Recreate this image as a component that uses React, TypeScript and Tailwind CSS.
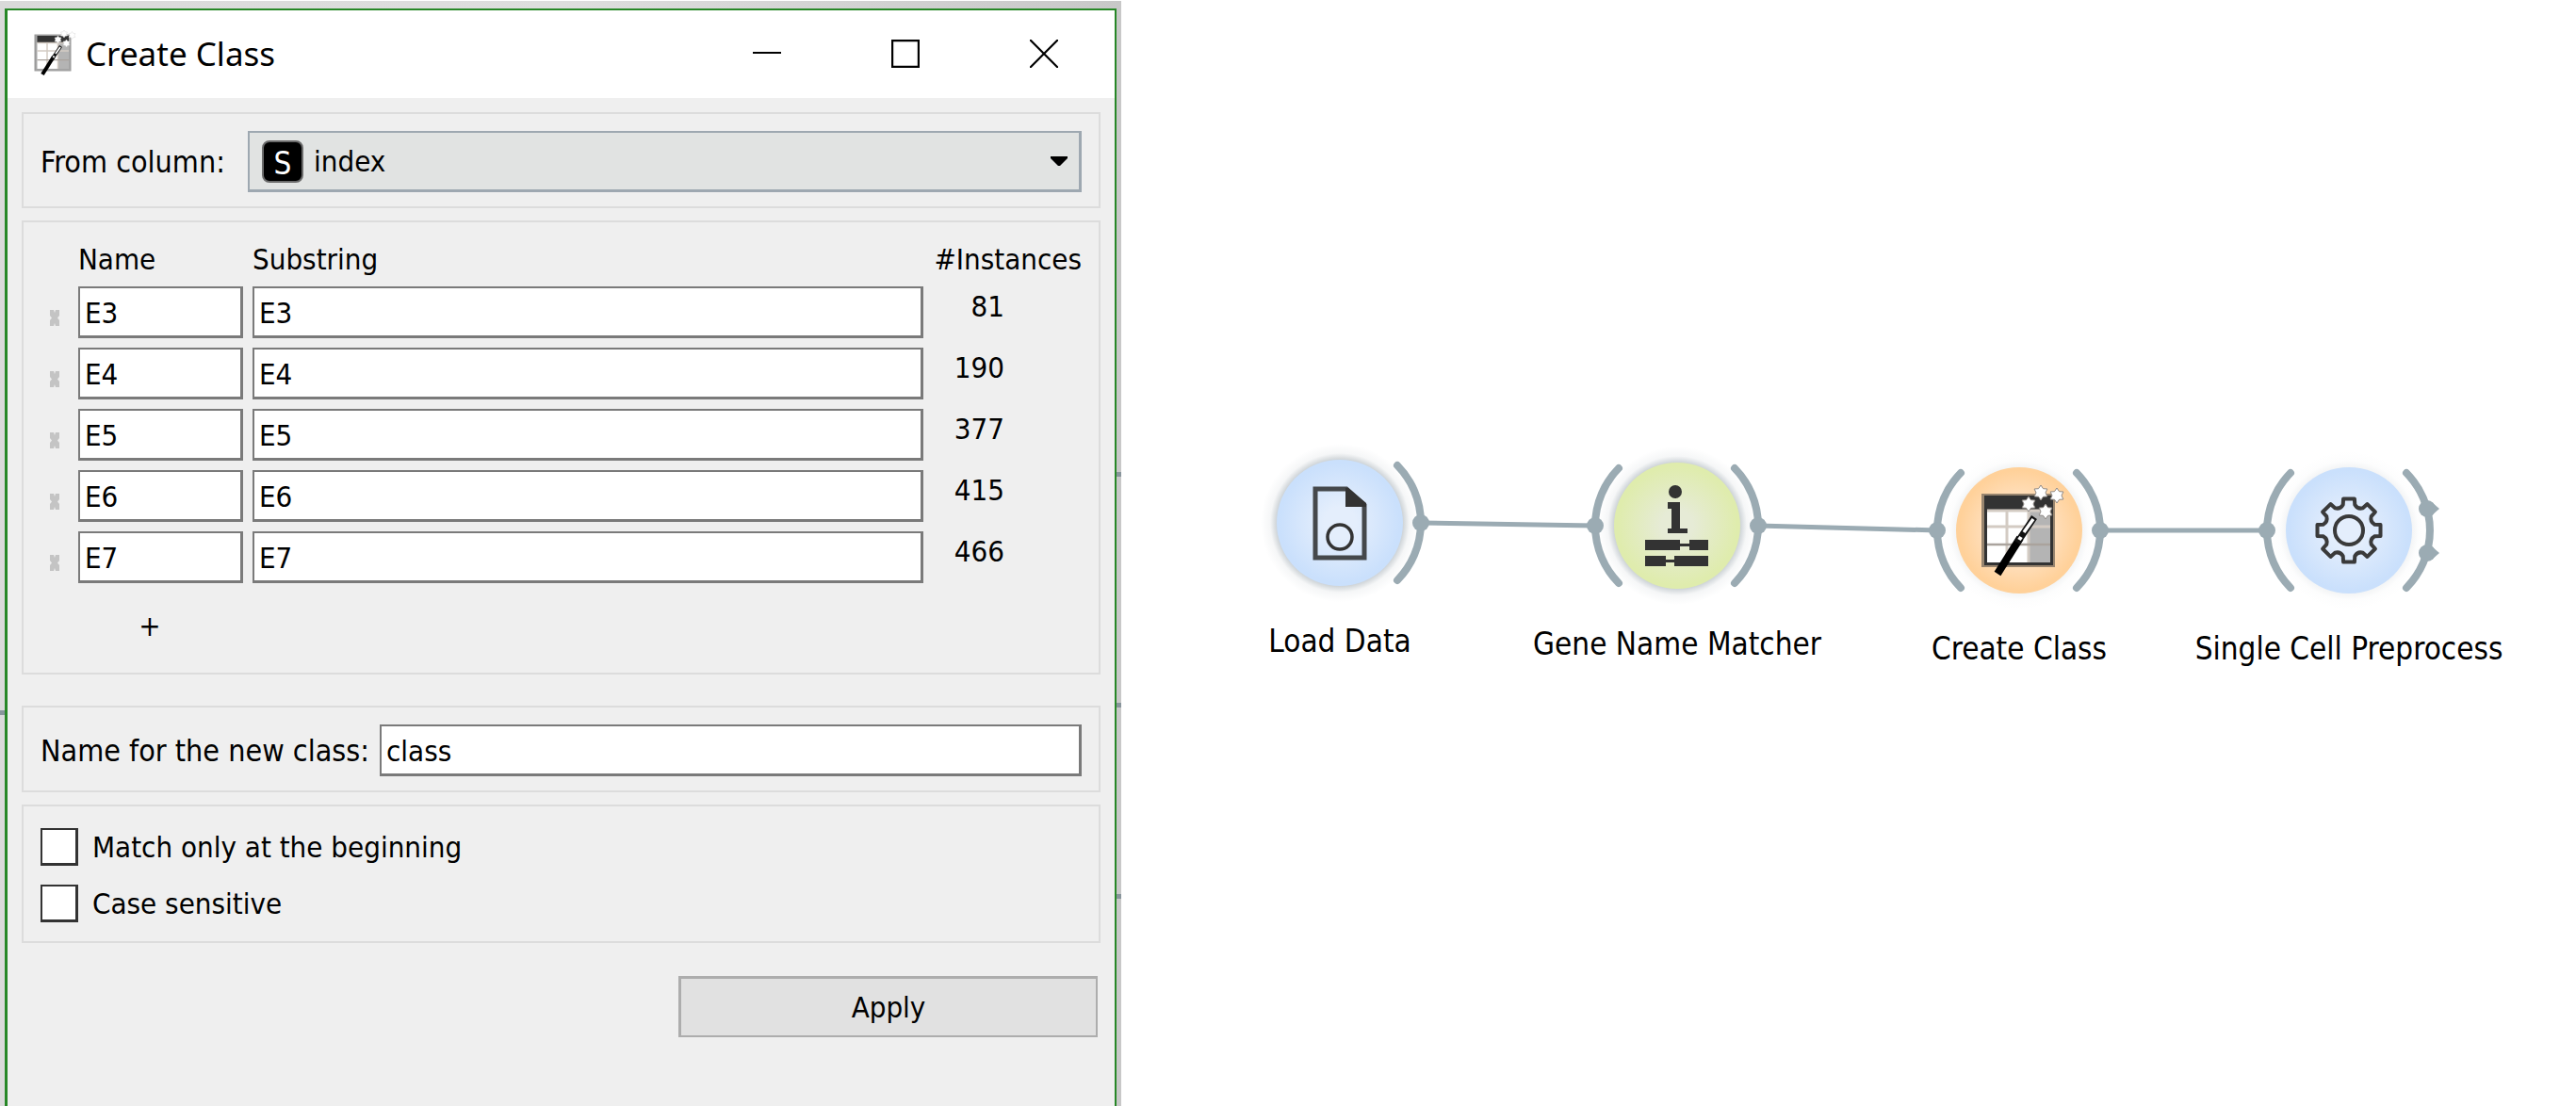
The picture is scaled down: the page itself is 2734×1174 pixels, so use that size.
import React from "react";

const rules = [
  { name: "E3", count: 81 },
  { name: "E4", count: 190 },
  { name: "E5", count: 377 },
  { name: "E6", count: 415 },
  { name: "E7", count: 466 },
];

/* Table with a magic wand; drawn around the origin, about 80 units wide. */
const stars = [
  [10, -28],
  [23, -40],
  [40, -37],
  [28, -20],
];

function starPoints(cx: number, cy: number) {
  const pts: string[] = [];
  for (let i = 0; i < 12; i++) {
    const r = i % 2 ? 5 : 8;
    const a = (i * Math.PI) / 6 - Math.PI / 2;
    pts.push(`${(cx + r * Math.cos(a)).toFixed(1)},${(cy + r * Math.sin(a)).toFixed(1)}`);
  }
  return pts.join(" ");
}

function WandTable({ frame, edge, starEdge }: { frame: string; edge: string; starEdge: string }) {
  return (
    <g>
      <rect x="-40" y="-39" width="78" height="78" fill={edge} />
      <rect x="-37" y="-37" width="73" height="74" fill={frame} />
      <rect x="-34" y="-36" width="67" height="15" fill="#333" />
      <rect x="-34" y="-22" width="67" height="56" fill="#fff" />
      <rect x="11" y="-22" width="22" height="56" fill="#b4b4b4" />
      <path d="M-34 -21H33M-13 -22V34M-34 -4H33" stroke="#d3cbc3" strokeWidth="3" />
      <path d="M10 -22V34" stroke="#d3cbc3" strokeWidth="3" />
      <path d="M-34 15H33" stroke="#aaa39d" strokeWidth="2.5" />
      <path d="M-23 46L1 8" stroke="#000" strokeWidth="8" />
      <path d="M-2 13L16 -14" stroke="#111" strokeWidth="7" />
      <path d="M5 2L15 -12" stroke="#fff" strokeWidth="3.5" />
      <path d="M0 10L2 7" stroke="#fff" strokeWidth="4" />
      {stars.map(([x, y]) => (
        <polygon key={x} points={starPoints(x, y)} fill="#fff" stroke={starEdge} strokeWidth="1" />
      ))}
    </g>
  );
}

function DocumentIcon() {
  return (
    <g>
      <path d="M-26 -36H7L26 -19V37H-26Z" fill="none" stroke="#45484b" strokeWidth="5" />
      <path d="M6 -37H9L28 -21V-17H6Z" fill="#333" />
      <circle cx="0" cy="15" r="13" fill="none" stroke="#333" strokeWidth="3.5" />
    </g>
  );
}

function GeneInfoIcon() {
  return (
    <g fill="#333">
      <circle cx="-2" cy="-36" r="7" />
      <rect x="-10" y="-25" width="13" height="7" />
      <rect x="-6" y="-25" width="9" height="30" />
      <rect x="-10" y="3" width="21" height="5" />
      <rect x="-34" y="15" width="37" height="11" />
      <rect x="13" y="15" width="20" height="11" />
      <rect x="0" y="19" width="16" height="3" />
      <rect x="-34" y="32" width="22" height="11" />
      <rect x="-3" y="32" width="36" height="11" />
      <rect x="-14" y="36" width="14" height="3" />
    </g>
  );
}

function gearPath() {
  const p = (r: number, deg: number) => {
    const a = ((deg - 90) * Math.PI) / 180;
    return `${(r * Math.cos(a)).toFixed(1)} ${(r * Math.sin(a)).toFixed(1)}`;
  };
  let d = "";
  for (let i = 0; i < 8; i++) {
    const c = i * 45;
    d += `${i ? "L" : "M"}${p(28, c - 13)}L${p(34, c - 10)}L${p(34, c + 10)}L${p(28, c + 13)}Q${p(24, c + 22.5)} ${p(28, c + 32)}`;
  }
  return d + "Z";
}

function GearIcon() {
  return (
    <g fill="none" stroke="#3a3a3a" strokeWidth="4">
      <path d={gearPath()} strokeLinejoin="round" />
      <circle cx="0" cy="0" r="15" />
    </g>
  );
}

type Node = {
  id: string;
  label: string;
  x: number;
  y: number;
  inner: string;
  outer: string;
  glow: number;
  input: boolean;
  outputs: number[];
  icon: React.ReactNode;
};

const nodes: Node[] = [
  { id: "load", label: "Load Data", x: 232, y: 555, inner: "#e4eefc", outer: "#cae0fc", glow: 0.5, input: false, outputs: [0], icon: <DocumentIcon /> },
  { id: "gene", label: "Gene Name Matcher", x: 590, y: 558, inner: "#e6ebd6", outer: "#dfecad", glow: 0.5, input: true, outputs: [0], icon: <GeneInfoIcon /> },
  { id: "class", label: "Create Class", x: 953, y: 563, inner: "#ffe8d2", outer: "#ffd19a", glow: 0.12, input: true, outputs: [0], icon: <WandTable frame="#333" edge="#98856f" starEdge="#8f8a86" /> },
  { id: "prep", label: "Single Cell Preprocess", x: 1303, y: 563, inner: "#e4eefc", outer: "#cae0fc", glow: 0.12, input: true, outputs: [-23, 24], icon: <GearIcon /> },
];

function WorkflowNode({ node }: { node: Node }) {
  return (
    <div className="absolute flex w-0 flex-col items-center" style={{ left: node.x, top: node.y - 100 }}>
      <svg width="200" height="200" viewBox="-100 -100 200 200" className="shrink-0" aria-hidden="true">
        <defs>
          <radialGradient id={`${node.id}-fill`}>
            <stop offset="0.25" stopColor={node.inner} />
            <stop offset="0.95" stopColor={node.outer} />
          </radialGradient>
          <radialGradient id={`${node.id}-glow`}>
            <stop offset="0.78" stopColor="#8d9aa3" stopOpacity={node.glow} />
            <stop offset="0.88" stopColor="#8d9aa3" stopOpacity={node.glow / 6} />
            <stop offset="1" stopColor="#8d9aa3" stopOpacity="0" />
          </radialGradient>
        </defs>
        <circle r="84" fill={`url(#${node.id}-glow)`} />
        <circle r="67" fill={`url(#${node.id}-fill)`} />
        <g fill="none" stroke="#9babb3" strokeWidth="8" strokeLinecap="round">
          {node.input && <path d="M-62 -61A87 87 0 0 0 -62 61" />}
          <path d="M61 -61A87 87 0 0 1 61 61" />
        </g>
        {node.input && <circle cx="-87" cy="0" r="9" fill="#9babb3" />}
        {node.outputs.map((y) => (
          <g key={y} fill="#9babb3">
            <circle cx={y ? 83 : 86} cy={y} r="9" />
            {y !== 0 && <path d={`M88 ${y - 7}L96 ${y}L88 ${y + 7}Z`} />}
          </g>
        ))}
        {node.icon}
      </svg>
      <span className="mt-1.5 whitespace-nowrap text-[33px] leading-10">{node.label}</span>
    </div>
  );
}

function Panel({ className, children }: { className: string; children: React.ReactNode }) {
  return <section className={`border-2 border-[#dcdcdc] ${className}`}>{children}</section>;
}

const field = "block h-[55px] border-2 border-r-3 border-b-3 border-[#7a7a7a] bg-white pt-0.5 pl-[5px] outline-none";
const tick = "size-10 shrink-0 appearance-none border-2 border-r-3 border-b-3 border-[#333] bg-white checked:bg-[#333]";

function Dialog() {
  return (
    <div className="relative mt-px flex flex-col bg-linear-to-r from-[#dadada] via-[#dedede] to-[#c8c8c8] px-[5px] pt-2">
      <span className="absolute left-0 top-[753px] h-[5px] w-[5px] bg-[#88959b]" />
      <span className="absolute right-0 top-[500px] h-[5px] w-[5px] bg-[#88959b]" />
      <span className="absolute right-0 top-[745px] h-[5px] w-[5px] bg-[#88959b]" />
      <span className="absolute right-0 top-[948px] h-[5px] w-[5px] bg-[#88959b]" />
      <div className="flex flex-1 flex-col border-2 border-b-0 border-l-3 border-[#278727] bg-[#efefef]">
        <header className="flex h-[93px] items-center bg-white pl-[27px] pr-[60px]">
          <svg width="48" height="52" viewBox="-43 -48 96 104" aria-hidden="true">
            <WandTable frame="#a6a6a6" edge="#9a9a9a" starEdge="#d8d8d8" />
          </svg>
          <h1 className="-mt-0.5 ml-2 flex-1 font-['Noto_Sans'] text-[35px] leading-10">Create Class</h1>
          <div className="flex gap-[117px] pb-0.5">
            <button aria-label="Minimize" className="block">
              <svg width="30" height="30" viewBox="0 0 30 30"><path d="M0 14H30" stroke="#000" strokeWidth="2" /></svg>
            </button>
            <button aria-label="Maximize" className="block">
              <svg width="30" height="30" viewBox="0 0 30 30"><path d="M1 1H29V29H1Z" fill="none" stroke="#000" strokeWidth="2.4" /></svg>
            </button>
            <button aria-label="Close" className="block">
              <svg width="30" height="30" viewBox="0 0 30 30"><path d="M0 0L30 30M30 0L0 30" stroke="#000" strokeWidth="2.2" /></svg>
            </button>
          </div>
        </header>

        <main className="flex flex-1 flex-col p-[15px] text-[31px] leading-9">
          <Panel className="flex items-center px-[18px] pt-[18px] pb-[15px]">
            <label htmlFor="column" className="w-[220px] text-[32px]">From column:</label>
            <div className="relative flex-1">
              <select id="column" className="block h-[65px] w-full appearance-none border-2 border-r-3 border-b-3 border-[#9ea8b1] bg-[#e1e3e2] pl-[68px] outline-none">
                <option>index</option>
              </select>
              <span className="pointer-events-none absolute left-[15px] top-2.5 flex h-[45px] w-11 items-center justify-center rounded-[8px] border-2 border-[#6b6b6b] bg-black pt-1 text-[33px] text-white">S</span>
              <svg className="pointer-events-none absolute right-[15px] top-[27px]" width="18" height="10" viewBox="0 0 18 10" aria-hidden="true">
                <path d="M0 0H18V2L10 10H8L0 2Z" />
              </svg>
            </div>
          </Panel>

          <Panel className="mt-[13px] pr-[18px] pb-[30px]">
            <table className="w-full table-fixed border-collapse">
              <colgroup>
                <col className="w-[58px]" />
                <col className="w-[185px]" />
                <col />
                <col className="w-[168px]" />
              </colgroup>
              <thead>
                <tr className="h-[68px] text-left align-bottom">
                  <td />
                  <th className="p-0 pb-[11px] font-normal">Name</th>
                  <th className="p-0 pb-[11px] font-normal">Substring</th>
                  <th className="p-0 pb-[11px] text-right font-normal">#Instances</th>
                </tr>
              </thead>
              <tbody>
                {rules.map((r) => (
                  <tr key={r.name} className="h-[65px] align-top">
                    <td className="p-0 pt-[25px] pl-[27px]">
                      <button aria-label={`Remove ${r.name}`} className="block">
                        <svg width="12" height="17" viewBox="0 0 12 17"><path d="M1 0H5L6 3L7 0H11V6L9 8.5L11 11V17H7L6 14L5 17H1V11L3 8.5L1 6Z" fill="#c4c4c4" /></svg>
                      </button>
                    </td>
                    <td className="p-0 pr-2.5"><input aria-label="Name" defaultValue={r.name} className={`${field} w-full`} /></td>
                    <td className="p-0"><input aria-label="Substring" defaultValue={r.name} className={`${field} w-full`} /></td>
                    <td className="p-0 pr-[82px] text-right leading-[42px]">{r.count}</td>
                  </tr>
                ))}
              </tbody>
            </table>
            <button aria-label="Add rule" className="mt-[15px] ml-[114px] block size-10">+</button>
          </Panel>

          <Panel className="mt-[33px] flex items-center gap-3 px-[18px] pt-[18px] pb-[15px]">
            <label htmlFor="class-name" className="w-[348px] whitespace-nowrap text-[32px]">Name for the new class:</label>
            <input id="class-name" defaultValue="class" className={`${field} min-w-0 flex-1`} />
          </Panel>

          <Panel className="mt-[13px] flex flex-col gap-5 px-[18px] pt-[23px] pb-5">
            <label className="flex items-center gap-[15px]"><input type="checkbox" className={tick} />Match only at the beginning</label>
            <label className="flex items-center gap-[15px]"><input type="checkbox" className={tick} />Case sensitive</label>
          </Panel>

          <button className="mt-[35px] mr-[3px] h-[65px] w-[445px] self-end border-2 border-t-3 border-l-3 border-[#adadad] bg-[#e1e1e1]">Apply</button>
        </main>
      </div>
    </div>
  );
}

export default function App() {
  return (
    <div className="grid min-h-screen grid-cols-[1190fr_1544fr] bg-white font-['DejaVu_Sans_Condensed','DejaVu_Sans',sans-serif] text-black">
      <Dialog />
      <div className="relative overflow-hidden">
        <svg className="absolute left-0 top-0 h-full w-full" aria-hidden="true">
          <g stroke="#9babb3" strokeWidth="5">
            <path d="M318 555L503 558" />
            <path d="M676 558L866 563" />
            <path d="M1039 563H1216" />
          </g>
        </svg>
        {nodes.map((n) => (
          <WorkflowNode key={n.id} node={n} />
        ))}
      </div>
    </div>
  );
}
